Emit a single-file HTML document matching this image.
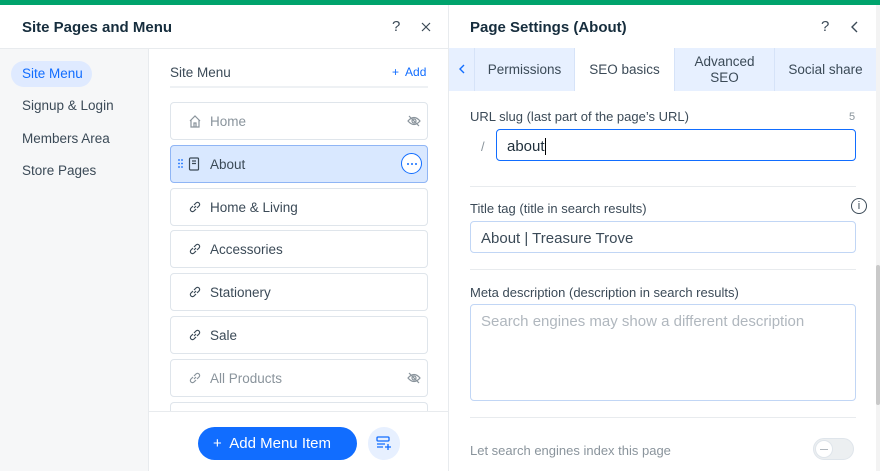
<!DOCTYPE html>
<html><head><style>
*{box-sizing:border-box;margin:0;padding:0}
body{width:880px;height:471px;overflow:hidden;font-family:"Liberation Sans",sans-serif;color:#20303c;background:#fff;position:relative}
.abs{position:absolute}
.green{left:0;top:0;width:880px;height:5px;background:#00a36c}
.h{font-size:15px;font-weight:bold;color:#162d3d}
.nav{left:0;top:48px;width:148px;height:423px;background:#f6f7f8;border-top:1px solid #e8ebee}
.navi{position:absolute;left:22px;font-size:13.5px;color:#3b4a57}
.item{position:absolute;left:170px;width:258px;height:38px;border:1px solid #dfe5eb;border-radius:4px;background:#fff;font-size:13.5px;color:#3b4a57}
.item span{position:absolute;left:39px;top:11px}
.item svg{position:absolute;left:17px;top:11px}
.tab{position:absolute;top:48px;height:43px;background:#e7f0ff;font-size:13.5px;color:#3b4a57;text-align:center;border-right:1px solid #d6e3f8}
.lbl{position:absolute;font-size:13px;color:#3b4a57}
.inp{position:absolute;border:1px solid #c1d6f5;border-radius:4px;background:#fff;font-size:15px}
</style></head><body>
<div class="abs green"></div>
<div class="abs h" style="left:22px;top:19px">Site Pages and Menu</div>
<div class="abs" style="left:392px;top:18px;font-size:15px;color:#3b4a57">?</div>
<svg class="abs" style="left:421px;top:22px" width="10" height="10" viewBox="0 0 10 10" stroke="#3b4a57" stroke-width="1.2"><path d="M1 1 9 9M9 1 1 9"/></svg>
<div class="abs nav"></div>
<div class="abs" style="left:11px;top:61px;width:81px;height:26px;border-radius:13px;background:#dfeaff"></div>
<div class="navi" style="top:66px;color:#116dff">Site Menu</div>
<div class="navi" style="top:98px">Signup &amp; Login</div>
<div class="navi" style="top:131px">Members Area</div>
<div class="navi" style="top:163px">Store Pages</div>
<div class="abs" style="left:148px;top:48px;width:1px;height:423px;background:#e8ebee"></div>
<div class="abs" style="left:448px;top:5px;width:1px;height:466px;background:#e8ebee"></div>
<div class="abs" style="left:0;top:48px;width:448px;height:1px;background:#e8ebee"></div>
<div class="abs" style="left:170px;top:65px;font-size:13.5px;color:#3b4a57">Site Menu</div>
<div class="abs" style="left:392px;top:65px;font-size:12px;color:#116dff">+&nbsp; Add</div>
<div class="abs" style="left:170px;top:86px;width:258px;height:2px;background:#eef1f4"></div>

<div class="item" style="top:102px;color:#8a949c"><svg width="14" height="14" viewBox="0 0 14 14" fill="none" stroke="#8a949c" stroke-width="1.2"><path d="M2 7 7 2 12 7M3 6v7h8V6M6 13V9h2v4"/></svg><span>Home</span><svg style="left:236px;top:12px" width="14" height="12" viewBox="0 0 14 12" fill="none" stroke="#8a949c" stroke-width="1.2"><path d="M1 6Q7 -1 13 6Q7 13 1 6Z"/><circle cx="7" cy="6" r="2"/><path d="M2 1 12 11"/></svg></div>
<div class="item" style="top:145px;background:#d9e8ff;border-color:#8fb5f5"><svg style="left:7px;top:13px" width="5" height="9" viewBox="0 0 5 9" fill="#116dff"><circle cx="1" cy="1" r="0.9"/><circle cx="4" cy="1" r="0.9"/><circle cx="1" cy="4.5" r="0.9"/><circle cx="4" cy="4.5" r="0.9"/><circle cx="1" cy="8" r="0.9"/><circle cx="4" cy="8" r="0.9"/></svg><svg width="12" height="14" viewBox="0 0 12 14" fill="none" stroke="#3b4a57" stroke-width="1.2"><rect x="1.5" y="1" width="9" height="12" rx="1"/><path d="M4 4h4M4 6.5h4"/></svg><span>About</span><div class="abs" style="left:230px;top:7px;width:21px;height:21px;border:1px solid #116dff;border-radius:50%;background:#fff"><svg style="position:absolute;left:5px;top:9px" width="10" height="2" viewBox="0 0 10 2" fill="#116dff"><circle cx="1" cy="1" r="1"/><circle cx="5" cy="1" r="1"/><circle cx="9" cy="1" r="1"/></svg></div></div>
<div class="item" style="top:188px"><svg width="14" height="14" viewBox="0 0 14 14" fill="none" stroke="#3b4a57" stroke-width="1.2"><path d="M6 8 8 6M5 6 3 8a2 2 0 0 0 3 3l2-2M9 8l2-2a2 2 0 0 0-3-3L6 5"/></svg><span>Home &amp; Living</span></div>
<div class="item" style="top:230px"><svg width="14" height="14" viewBox="0 0 14 14" fill="none" stroke="#3b4a57" stroke-width="1.2"><path d="M6 8 8 6M5 6 3 8a2 2 0 0 0 3 3l2-2M9 8l2-2a2 2 0 0 0-3-3L6 5"/></svg><span>Accessories</span></div>
<div class="item" style="top:273px"><svg width="14" height="14" viewBox="0 0 14 14" fill="none" stroke="#3b4a57" stroke-width="1.2"><path d="M6 8 8 6M5 6 3 8a2 2 0 0 0 3 3l2-2M9 8l2-2a2 2 0 0 0-3-3L6 5"/></svg><span>Stationery</span></div>
<div class="item" style="top:316px"><svg width="14" height="14" viewBox="0 0 14 14" fill="none" stroke="#3b4a57" stroke-width="1.2"><path d="M6 8 8 6M5 6 3 8a2 2 0 0 0 3 3l2-2M9 8l2-2a2 2 0 0 0-3-3L6 5"/></svg><span>Sale</span></div>
<div class="item" style="top:359px;color:#8a949c"><svg width="14" height="14" viewBox="0 0 14 14" fill="none" stroke="#8a949c" stroke-width="1.2"><path d="M6 8 8 6M5 6 3 8a2 2 0 0 0 3 3l2-2M9 8l2-2a2 2 0 0 0-3-3L6 5"/></svg><span>All Products</span><svg style="left:236px;top:12px" width="14" height="12" viewBox="0 0 14 12" fill="none" stroke="#8a949c" stroke-width="1.2"><path d="M1 6Q7 -1 13 6Q7 13 1 6Z"/><circle cx="7" cy="6" r="2"/><path d="M2 1 12 11"/></svg></div>
<div class="item" style="top:402px;height:20px;border-bottom:none"></div>
<div class="abs" style="left:149px;top:411px;width:299px;height:60px;background:#fff;border-top:1px solid #e8ebee"></div>
<div class="abs" style="left:198px;top:427px;width:159px;height:33px;border-radius:17px;background:#116dff;color:#fff;font-size:15px;line-height:33px;padding-left:15px">+&nbsp; Add Menu Item</div>
<div class="abs" style="left:368px;top:427px;width:32px;height:33px;border-radius:16px;background:#e7f0ff"><svg style="position:absolute;left:8px;top:9px" width="16" height="15" viewBox="0 0 16 15" fill="none" stroke="#116dff" stroke-width="1.3"><rect x="1" y="1" width="12" height="4" rx="1"/><path d="M1 8h8M1 11h6M12 8v6M9 11h6"/></svg></div>

<div class="abs h" style="left:470px;top:19px">Page Settings (About)</div>
<div class="abs" style="left:821px;top:18px;font-size:15px;color:#3b4a57">?</div>
<svg class="abs" style="left:851px;top:21px" width="7" height="12" viewBox="0 0 7 12" fill="none" stroke="#3b4a57" stroke-width="1.4"><path d="M6 1 1 6 6 11"/></svg>
<div class="tab" style="left:449px;width:26px"><svg style="position:absolute;left:10px;top:16px" width="6" height="10" viewBox="0 0 6 10" fill="none" stroke="#116dff" stroke-width="1.4"><path d="M5 1 1 5 5 9"/></svg></div>
<div class="tab" style="left:475px;width:100px;line-height:43px">Permissions</div>
<div class="tab" style="left:575px;width:100px;background:#fff;line-height:43px">SEO basics</div>
<div class="tab" style="left:675px;width:100px;padding-top:6px;line-height:16px">Advanced<br>SEO</div>
<div class="tab" style="left:775px;width:101px;line-height:43px;border-right:none">Social share</div>
<div class="abs" style="left:876px;top:5px;width:4px;height:466px;background:#f3f3f3"></div>
<div class="abs" style="left:876px;top:265px;width:4px;height:140px;background:#c9c9c9;border-radius:2px"></div>

<div class="lbl" style="left:470px;top:109px">URL slug (last part of the page’s URL)</div>
<div class="lbl" style="left:849px;top:111px;font-size:11px;color:#8a949c">5</div>
<div class="lbl" style="left:481px;top:139px;color:#8a949c">/</div>
<div class="inp" style="left:496px;top:129px;width:360px;height:32px;border-color:#116dff;padding:8px 10px;color:#20303c">about<span style="border-left:1px solid #000"></span></div>
<div class="abs" style="left:470px;top:186px;width:386px;height:1px;background:#e8ebee"></div>
<div class="lbl" style="left:470px;top:201px">Title tag (title in search results)</div>
<div class="abs" style="left:851px;top:198px;width:16px;height:16px;border:1px solid #3b4a57;border-radius:50%;font-size:11px;text-align:center;line-height:14px;color:#3b4a57">i</div>
<div class="inp" style="left:470px;top:221px;width:386px;height:32px;padding:8px 10px;color:#3b4a57">About | Treasure Trove</div>
<div class="abs" style="left:470px;top:269px;width:386px;height:1px;background:#e8ebee"></div>
<div class="lbl" style="left:470px;top:285px">Meta description (description in search results)</div>
<div class="inp" style="left:470px;top:304px;width:386px;height:97px;padding:8px 10px;color:#b0b7be">Search engines may show a different description</div>
<div class="abs" style="left:470px;top:417px;width:386px;height:1px;background:#e8ebee"></div>
<div class="lbl" style="left:470px;top:443px;color:#8a949c">Let search engines index this page</div>
<div class="abs" style="left:813px;top:438px;width:41px;height:22px;border-radius:11px;background:#eceff1;border:1px solid #dfe5eb"><div style="position:absolute;left:1px;top:1px;width:18px;height:18px;border-radius:50%;background:#fff;border:1px solid #dfe5eb"><div style="position:absolute;left:4px;top:8px;width:8px;height:1px;background:#b0b7be"></div></div></div>
</body></html>
